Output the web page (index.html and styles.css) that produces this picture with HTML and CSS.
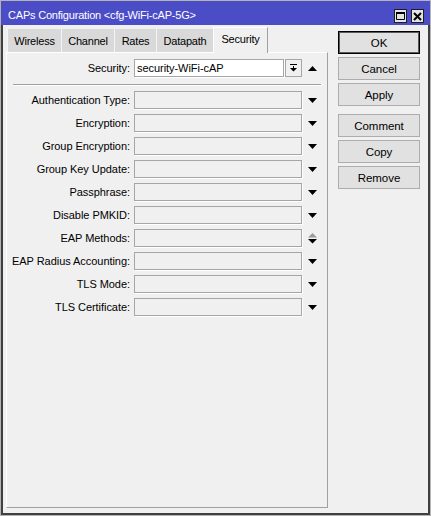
FILE: index.html
```html
<!DOCTYPE html>
<html>
<head>
<meta charset="UTF-8">
<title>CAPs Configuration</title>
<link rel="stylesheet" href="styles.css">
</head>
<body>

<div class="window">
	<div class="titlebar">
		<span class="title">CAPs Configuration &lt;cfg-WiFi-cAP-5G&gt;</span>
		<span class="winbtn">
			<svg width="11" height="12" viewBox="0 0 11 12"><path d="M1.5 2.5h8v7h-8z" fill="none" stroke="#000"/><path d="M1 2h9v2H1z"/></svg>
		</span>
		<span class="winbtn">
			<svg width="11" height="12" viewBox="0 0 11 12"><path d="M2 3l7 7M9 3l-7 7" stroke="#000" stroke-width="2"/></svg>
		</span>
	</div>

	<div class="frame">
		<div class="main">
			<div class="tabs">
				<span class="tab wireless">Wireless</span>
				<span class="tab channel">Channel</span>
				<span class="tab rates">Rates</span>
				<span class="tab datapath">Datapath</span>
				<span class="tab security active">Security</span>
			</div>
			<div class="panel">
				<div class="row">
					<span class="label">Security:</span>
					<span class="field text">security-WiFi-cAP</span>
					<span class="pick">
						<svg width="7" height="8" viewBox="0 0 7 8"><path d="M0 0h7v1H0zM3 2h1v2H3zM0 4h7L3.5 7.5z"/></svg>
					</span>
					<span class="arrow"><svg width="9" height="5" viewBox="0 0 9 5"><path d="M0 5h9L4.5 0z"/></svg></span>
				</div>
				<div class="sep"></div>
				<div class="row">
					<span class="label">Authentication Type:</span>
					<span class="field"></span>
					<span class="arrow"><svg width="9" height="5" viewBox="0 0 9 5"><path d="M0 0h9L4.5 5z"/></svg></span>
				</div>
				<div class="row">
					<span class="label">Encryption:</span>
					<span class="field"></span>
					<span class="arrow"><svg width="9" height="5" viewBox="0 0 9 5"><path d="M0 0h9L4.5 5z"/></svg></span>
				</div>
				<div class="row">
					<span class="label">Group Encryption:</span>
					<span class="field"></span>
					<span class="arrow"><svg width="9" height="5" viewBox="0 0 9 5"><path d="M0 0h9L4.5 5z"/></svg></span>
				</div>
				<div class="row">
					<span class="label">Group Key Update:</span>
					<span class="field"></span>
					<span class="arrow"><svg width="9" height="5" viewBox="0 0 9 5"><path d="M0 0h9L4.5 5z"/></svg></span>
				</div>
				<div class="row">
					<span class="label">Passphrase:</span>
					<span class="field"></span>
					<span class="arrow"><svg width="9" height="5" viewBox="0 0 9 5"><path d="M0 0h9L4.5 5z"/></svg></span>
				</div>
				<div class="row">
					<span class="label">Disable PMKID:</span>
					<span class="field"></span>
					<span class="arrow"><svg width="9" height="5" viewBox="0 0 9 5"><path d="M0 0h9L4.5 5z"/></svg></span>
				</div>
				<div class="row">
					<span class="label">EAP Methods:</span>
					<span class="field"></span>
					<span class="arrow"><svg width="9" height="11" viewBox="0 0 9 11"><path d="M0 4.5h9L4.5 0z" fill="#9a9a9a"/><path d="M0 6h9L4.5 10.5z"/></svg></span>
				</div>
				<div class="row">
					<span class="label">EAP Radius Accounting:</span>
					<span class="field"></span>
					<span class="arrow"><svg width="9" height="5" viewBox="0 0 9 5"><path d="M0 0h9L4.5 5z"/></svg></span>
				</div>
				<div class="row">
					<span class="label">TLS Mode:</span>
					<span class="field"></span>
					<span class="arrow"><svg width="9" height="5" viewBox="0 0 9 5"><path d="M0 0h9L4.5 5z"/></svg></span>
				</div>
				<div class="row">
					<span class="label">TLS Certificate:</span>
					<span class="field"></span>
					<span class="arrow"><svg width="9" height="5" viewBox="0 0 9 5"><path d="M0 0h9L4.5 5z"/></svg></span>
				</div>
			</div>
		</div>

		<div class="buttons">
			<span class="btn default">OK</span>
			<span class="btn">Cancel</span>
			<span class="btn">Apply</span>
			<span class="btn group">Comment</span>
			<span class="btn">Copy</span>
			<span class="btn">Remove</span>
		</div>
	</div>
</div>

</body>
</html>
```

FILE: styles.css
```css
* {
	box-sizing: border-box;
}
html, body {
	background: #f0f0f0;
	color: #000;
	font-family: "Liberation Sans", Arial, sans-serif;
	font-size: 11px;
	letter-spacing: -0.05px;
	margin: 0;
	padding: 0;
}
.window {
	border: 1px solid #b4b4b4;
	display: flex;
	flex-direction: column;
	height: 516px;
	width: 431px;
}
/* Blue caption bar with the two small window buttons */
.titlebar {
	align-items: flex-end;
	background: #4b4dc7;
	display: flex;
	flex: none;
	gap: 4px;
	height: 24px;
	padding: 0 6px 2px 7px;
}
.title {
	color: #fff;
	flex: 1;
	letter-spacing: -0.2px;
	line-height: 14px;
	padding-bottom: 1px;
}
.winbtn {
	align-items: center;
	background: #e4e4e4;
	border: 1px solid #1e1e1e;
	display: flex;
	height: 14px;
	justify-content: center;
	width: 13px;
}
.frame {
	border: 2px solid #404040;
	border-top: 0;
	display: flex;
	flex: 1;
	padding: 0 8px 5px 3px;
}
.main {
	display: flex;
	flex-direction: column;
	width: 322px;
}
.tabs {
	align-items: flex-end;
	display: flex;
	height: 27px;
	padding-left: 1px;
}
.tab {
	background: #d9d9d9;
	border-left: 1px solid #f4f4f4;
	height: 23px;
	letter-spacing: -0.2px;
	line-height: 24px;
	text-align: center;
}
.wireless { width: 54px; }
.channel { width: 53px; }
.rates { width: 42px; }
.datapath { width: 57px; }
.security { width: 55px; }
.tab.active {
	background: #f0f0f0;
	border-left: 1px solid #fff;
	border-right: 1px solid #a0a0a0;
	border-top: 1px solid #fff;
	height: 26px;
	line-height: 22px;
	margin-bottom: -1px;
	position: relative;
	z-index: 1;
}
.panel {
	border: 1px solid #a0a0a0;
	border-left-color: #fff;
	border-top-color: #fff;
	display: flex;
	flex: 1;
	flex-direction: column;
	padding-top: 6px;
}
.row {
	align-items: center;
	display: flex;
	height: 18px;
	margin-bottom: 5px;
}
.label {
	flex: none;
	padding-right: 4px;
	text-align: right;
	width: 127px;
}
.field {
	background: #f0f0f0;
	border: 1px solid #a6a6a6;
	box-shadow: 1px 1px 0 #fff;
	flex: none;
	height: 18px;
	width: 168px;
}
.field.text {
	background: #fff;
	line-height: 16px;
	padding-left: 2px;
	width: 150px;
}
.pick {
	align-items: center;
	background: #f0f0f0;
	border: 1px solid #a6a6a6;
	display: flex;
	flex: none;
	height: 18px;
	justify-content: center;
	margin-left: 1px;
	width: 17px;
}
.arrow {
	align-items: center;
	display: flex;
	flex: none;
	justify-content: center;
	width: 20px;
}
.row .pick + .arrow {
	width: 21px;
}
.sep {
	border-bottom: 1px solid #fff;
	border-top: 1px solid #a0a0a0;
	height: 2px;
	margin: 2px 6px 5px;
}
.buttons {
	display: flex;
	flex-direction: column;
	margin-left: 10px;
	padding-top: 6px;
	width: 82px;
}
.btn {
	align-items: center;
	background: #e1e1e1;
	border: 1px solid #adadad;
	display: flex;
	font-size: 11.5px;
	height: 23px;
	justify-content: center;
	margin-bottom: 3px;
}
.btn.default {
	border-color: #000;
	box-shadow: inset 0 0 0 1px #5a5a5a;
}
.btn.group {
	margin-top: 5px;
}
```
